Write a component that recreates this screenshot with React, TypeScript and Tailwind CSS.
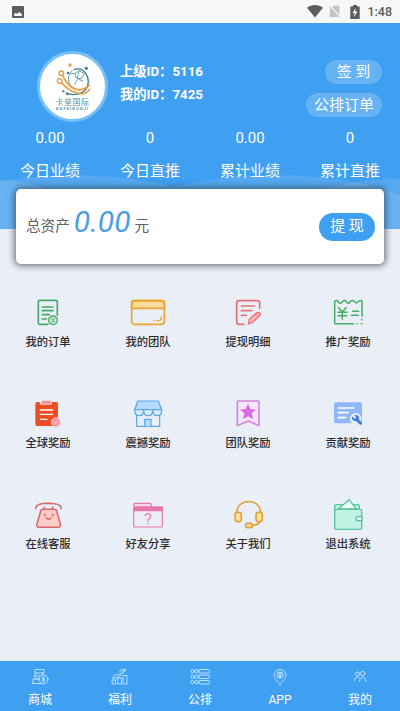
import React from "react";

const FONT = "font-[Roboto,'Noto_Sans_CJK_SC',sans-serif]";

function StatusBar() {
  return (
    <div className="flex h-[23px] items-center bg-[#f7f7f7] pl-3 pr-2 text-[#5c5c5c]">
      <svg width="12" height="12" viewBox="0 0 12 12">
        <rect width="12" height="12" rx="1" fill="#5e5e5e" />
        <path d="M2 10V8.500l1.800-1.700L5 8l2.500-2L10 8.500V10z" fill="#fff" />
      </svg>
      <svg className="ml-auto" width="16" height="13" viewBox="0 0 16 13">
        <path d="M0 2.7C4.5-.9 11.500-.9 16 2.700L8 12.600z" fill="#5c5c5c" />
      </svg>
      <svg className="ml-[6px]" width="12" height="13" viewBox="0 0 12 13">
        <path d="M4.500.8H10.500V12H.800V4.500z" fill="#c4c4c4" />
        <path d="M.4.800 11.500 12.500" stroke="#f7f7f7" strokeWidth="2" />
        <path d="M.2 1.300 10.800 12.600" stroke="#a9a9a9" strokeWidth=".8" />
      </svg>
      <svg className="ml-[9px]" width="10" height="14" viewBox="0 0 10 14">
        <path d="M.3 1.500H3V0h4v1.500h2.700V14H.300z" fill="#5c5c5c" />
        <path d="M5.600 3 2.500 8h2l-.5 4 3.500-5.500H5.300z" fill="#fff" />
      </svg>
      <span className="ml-[7px] pt-px text-[12.500px] font-medium leading-none">1:48</span>
    </div>
  );
}

function Logo() {
  return (
    <div className="flex size-[71px] flex-col items-center rounded-full border-[3px] border-[#78c1f7] bg-white pt-[8px]">
      <svg width="36" height="34" viewBox="158 184 108 102" fill="none">
        <path d="M215 207C243 196 265 227 255 258C245 279 216 289 190 276" stroke="#397e8b" strokeWidth="4" />
        <path d="M211 208C193 224 195 249 211 262M218 218l13-8 15 9-9 15-17-3zM231 210l-7 23 18 9M202 220l16-2M225 237l-8 15" stroke="#6da3aa" strokeWidth="3" />
        <path d="M180 223C201 269 232 281 263 252M177 246C205 277 247 293 263 264" stroke="#e1a24b" strokeWidth="5" />
        <path d="M185 231C208 267 231 270 247 263" stroke="#e1a24b" strokeWidth="3" />
        <circle cx="177" cy="218" r="7" fill="#fff" stroke="#df9b3f" strokeWidth="4" />
        <circle cx="172" cy="241" r="7" fill="#fff" stroke="#df9b3f" strokeWidth="4" />
        <circle cx="203" cy="193" r="5" fill="#dfa157" />
        <circle cx="252" cy="203" r="5" fill="#3e808b" />
        <circle cx="197" cy="217" r="4" fill="#3e808b" />
        <path d="M180 270l6 4m6 5 6 3" stroke="#3e808b" strokeWidth="5" />
      </svg>
      <div className="mt-[2px] whitespace-nowrap text-[8px] font-normal leading-[9px] tracking-[0.500px] text-[#4f8f98]">卡垒国际</div>
      <div className="whitespace-nowrap text-[4.300px] font-bold leading-[4px] tracking-[0.900px] text-[#5c969e]">KAFEIGUOJI</div>
    </div>
  );
}

const stats = [
  ["0.00", "今日业绩"],
  ["0", "今日直推"],
  ["0.00", "累计业绩"],
  ["0", "累计直推"],
];

function Header() {
  return (
    <div className="relative h-[206px] overflow-hidden bg-[#3f9ff1] text-white">
      <svg className="absolute left-0 top-[150px]" width="400" height="56" viewBox="0 173 400 56">
        <g fill="#fff" fillOpacity=".11">
          <path d="M-85 229A160 53 0 0 1 175 187A160 53 0 0 1 435 229z" />
          <ellipse cx="-14" cy="229" rx="102" ry="50" />
          <ellipse cx="395" cy="229" rx="115" ry="50" />
        </g>
      </svg>
      <div className="relative flex pl-[37px] pr-[18px] pt-7">
        <Logo />
        <div className="ml-3 pt-[9px] text-[13.300px] font-bold leading-[23px]">
          <div>上级ID：5116</div>
          <div>我的ID：7425</div>
        </div>
        <div className="ml-auto flex flex-col items-end gap-[9px] pt-[9px] text-[15px] leading-[25px]">
          <div className="h-6 w-[57px] rounded-full bg-[#65b2f5] text-center">签 到</div>
          <div className="h-6 w-[76px] rounded-full bg-[#65b2f5] text-center">公排订单</div>
        </div>
      </div>
      <div className="relative grid grid-cols-4 pt-[5px] text-center">
        {stats.map(([n, t]) => (
          <div key={t}>
            <div className="text-[15px] leading-[22px]">{n}</div>
            <div className="mt-[11px] text-[15px] leading-[22px]">{t}</div>
          </div>
        ))}
      </div>
    </div>
  );
}

/* Menu icons, each drawn on a 108-unit canvas */
const menu: { label: string; box: string; art: React.ReactNode }[] = [
  {
    label: "我的订单",
    box: "90 30 108 108",
    art: (
      <g stroke="#48ab6a" strokeWidth="5">
        <path d="M144 118H119Q115 118 115 114V50Q115 46 119 46H168Q172 46 172 50V91" />
        <path d="M127 66h32M127 77h32M127 89h21M127 102h12" />
        <circle cx="159" cy="106" r="13" fill="#c8e8d3" strokeWidth="4" />
        <path d="M153 99l6 6 6-6M159 105v3l-6 5m6-5 6 5" strokeWidth="2.500" />
      </g>
    ),
  },
  {
    label: "我的团队",
    box: "390 30 108 108",
    art: (
      <g stroke="#eaa52f" strokeWidth="5">
        <path d="M395 70V54Q395 47 402 47H486Q493 47 493 54V70z" fill="#ffdb9d" />
        <rect x="395" y="47" width="98" height="71" rx="9" />
        <path d="M461 107h1m8 0h6Q484 107 484 96" strokeWidth="4" />
      </g>
    ),
  },
  {
    label: "提现明细",
    box: "90 30 108 108",
    art: (
      <g stroke="#e5717a" strokeWidth="5">
        <path d="M179 70V54Q179 47 172 47H117Q110 47 110 54V111Q110 118 117 118H132" />
        <path d="M124 63h40M124 77h31M124 91h15" />
        <path d="M145 117l3-14 24-21q10-1 9 7l-23 23z" fill="#ffb8bc" strokeWidth="4" />
        <path d="M166 87l10 9" strokeWidth="2" />
      </g>
    ),
  },
  {
    label: "推广奖励",
    box: "390 30 108 108",
    art: (
      <g stroke="#48ad69" strokeWidth="4.500">
        <path d="M461 116H405Q404 116 404 113V49Q410 44 414 49Q421 60 428 49Q434 44 439 49Q445 60 452 49Q457 44 463 49Q469 58 476 49Q481 44 486 49V94" />
        <path d="M416 68l11 13 11-13M427 81v22M414 82h27M414 92h27M458 79h18M454 91h21" />
        <path d="M471 116h1m12 0h1m0-13v1" />
      </g>
    ),
  },
  {
    label: "全球奖励",
    box: "90 33 108 108",
    art: (
      <>
        <rect x="106" y="51" width="68" height="72" rx="6" fill="#ee4c25" />
        <path d="M119 51h37v4q0 4-4 4h-29q-4 0-4-4z" fill="#fbd9d5" />
        <rect x="125" y="47" width="28" height="9" rx="3" fill="#f3909b" />
        <path d="M121 75h37M121 88h37M121 103h20" stroke="#fff" strokeWidth="4" />
        <circle cx="168" cy="112" r="14" fill="#f39aaa" stroke="#fbdbe1" strokeWidth="2" />
        <path d="M162 112l4 4 8-7" stroke="#fbd5dc" strokeWidth="2.500" />
      </>
    ),
  },
  {
    label: "震撼奖励",
    box: "390 33 108 108",
    art: (
      <g stroke="#5ba6e4" strokeWidth="3.500">
        <path d="M410 91V124H479V91" />
        <path d="M413 48H475L485 75H404z" fill="#b6dafd" />
        <path d="M404 74H431Q431 92 418 92Q404 92 404 74z" fill="#d9ecfe" />
        <path d="M431 74H458Q458 92 445 92Q431 92 431 74z" fill="#d9ecfe" />
        <path d="M458 74H485Q485 92 472 92Q458 92 458 74z" fill="#d9ecfe" />
        <path d="M434 124V103H453V124" fill="#b6dafd" />
      </g>
    ),
  },
  {
    label: "团队奖励",
    box: "90 33 108 108",
    art: (
      <>
        <path d="M112 122V51Q112 48 115 48H174Q177 48 177 51V122L145 108z" fill="#f4e5fa" stroke="#d381dc" strokeWidth="4.500" />
        <path d="M144 56l7 16 17 2-13 11 4 18-15-9-15 9 4-18-13-11 17-2z" fill="#d96bdc" />
      </>
    ),
  },
  {
    label: "贡献奖励",
    box: "390 33 108 108",
    art: (
      <>
        <rect x="402" y="52" width="84" height="63" rx="5" fill="#91b7fb" />
        <path d="M415 69h46M415 83h29M415 98h22" stroke="#fff" strokeWidth="5" />
        <circle cx="467" cy="101" r="17" fill="#eaf0fb" />
        <path d="M462 91q11-3 16 6l-2 6 11 12q-2 6-7 4l-12-11q-8 2-13-7l2-7 6 7 6-4z" fill="#427bdd" />
      </>
    ),
  },
  {
    label: "在线客服",
    box: "90 36 108 108",
    art: (
      <g stroke="#d7686b" strokeWidth="4.500">
        <path d="M107 71Q106 55 146 55Q186 56 184 71" />
        <path d="M123 75Q125 73 131 73H160Q166 73 169 75L181 117Q184 127 174 127H118Q107 127 111 117z" fill="#ffcac8" />
        <path d="M132 66v6M158 66v6M134 88v4M158 88v4M139 99Q146 107 153 99" />
      </g>
    ),
  },
  {
    label: "好友分享",
    box: "390 36 108 108",
    art: (
      <g stroke="#e779b0" strokeWidth="3.500">
        <path d="M402 66V57Q402 55 405 55H451Q454 55 454 58V66" fill="#f6d6e9" />
        <rect x="401" y="66" width="86" height="60" rx="3" />
        <path d="M402 66H487V77H402z" fill="#e276ad" />
        <path d="M435 92Q437 86 444 86Q453 87 452 94Q451 99 444 104V109M444 116v1" strokeWidth="4" />
      </g>
    ),
  },
  {
    label: "关于我们",
    box: "90 36 108 108",
    art: (
      <g stroke="#df9f30" strokeWidth="4.500">
        <path d="M110 83C111 38 181 38 182 83M181 109Q174 121 156 121" />
        <rect x="105" y="82" width="19" height="28" rx="8" fill="#ffdd9e" />
        <rect x="168" y="82" width="19" height="28" rx="8" fill="#ffdd9e" />
        <rect x="137" y="115" width="20" height="13" rx="6" fill="#ffdd9e" />
      </g>
    ),
  },
  {
    label: "退出系统",
    box: "390 36 108 108",
    art: (
      <g stroke="#5bc2a0" strokeWidth="4">
        <path d="M404 73V64Q404 59 410 59H473Q478 59 478 64V73" fill="#baf4df" />
        <path d="M415 72L447 44L469 72z" fill="#f0faf8" />
        <rect x="404" y="73" width="81" height="60" rx="4" fill="#c1f2e3" />
        <path d="M486 95H474Q468 95 468 101Q468 107 474 107H486z" fill="#e8faf4" />
      </g>
    ),
  },
];

const tabs: { label: string; art: React.ReactNode }[] = [
  {
    label: "商城",
    art: (
      <>
        <rect x="4.500" y="1.500" width="10" height="3.500" rx="1.500" />
        <path d="M7 5 4.500 6.500V8H10M5 8v3h4M3 11h6M2.500 15.500h9M3 11.500v3.500M12.500 5v2" />
        <circle cx="13.500" cy="11.500" r="4.500" />
        <path d="M15 10q-3-1.500-3 .5 0 .7 1.500 1t1.500 1q0 2-3 .5M13.500 9v5" />
      </>
    ),
  },
  {
    label: "福利",
    art: <path d="M2.500 12h3v4h-3zM8 10h3.500V16H8zM13.500 7.500H17V16h-3.500zM2.500 9.500l3.500-3 3 .5 6.500-5.500M3 10.500l6-1.500 6.500-6.500V1.500h-4L9.500 4" />,
  },
  {
    label: "公排",
    art: (
      <>
        {[1.5, 7, 12.5].map((y) => (
          <g key={y}>
            <circle cx="2.500" cy={y + 1.7} r="1.700" />
            <circle cx="6.500" cy={y + 1.7} r="1.700" />
            <rect x="9" y={y} width="10.500" height="3.500" rx="1" />
          </g>
        ))}
      </>
    ),
  },
  {
    label: "APP",
    art: (
      <>
        <path d="M10 16.500C7.500 13 4 10.500 4 7A6 5.500 0 0 1 16 7C16 10.500 12.500 13 10 16.500z" />
        <circle cx="10" cy="7" r="3.200" />
        <path d="M11.500 5.500q-3-1-3 .5 0 .7 1.500 1t1.500 1q0 1.500-3 .5M10 4.500v5" />
      </>
    ),
  },
  {
    label: "我的",
    art: (
      <>
        <circle cx="7.500" cy="6" r="2" />
        <circle cx="12.700" cy="5.500" r="2.200" />
        <path d="M4.500 12.500q0-3.500 3-3.500 1.500 0 2 1M9.500 13.500q0-4 3.200-4t3.300 4" />
      </>
    ),
  },
];

export default function App() {
  return (
    <div className={`flex h-[711px] w-[400px] flex-col overflow-hidden bg-[#e9eef7] ${FONT}`}>
      <StatusBar />
      <Header />
      <div className="relative mx-4 -mt-10 flex h-[75px] shrink-0 items-center rounded-[5px] bg-white pl-[10px] pr-[9px] text-[#606060] shadow-[0_0_6px_2px_rgba(55,60,70,0.65)]">
        <span className="pt-px text-[14.600px]">总资产</span>
        <span className="ml-[4px] pb-[10px] text-[30px] italic leading-none text-[#4d9ee0]">0.00</span>
        <span className="ml-[4px] pt-px text-[14.600px]">元</span>
        <div className="ml-auto h-7 w-14 rounded-full bg-[#3f9ff1] text-center text-[15px] leading-[27px] text-white">提 现</div>
      </div>
      <div className="mt-[31px] grid w-[396px] grid-cols-[98px_100px_100px_98px]">
        {menu.map((m) => (
          <div key={m.label} className="flex h-[101px] flex-col items-center first:pl-0 [&:nth-child(4n)]:pl-[2px] [&:nth-child(4n+1)]:pr-[2px]">
            <svg width="36" height="36" viewBox={m.box} fill="none" strokeLinecap="round" strokeLinejoin="round">
              {m.art}
            </svg>
            <div className="mt-[3px] whitespace-nowrap text-[11.300px] font-medium leading-[17px] text-[#2c2c2e]">{m.label}</div>
          </div>
        ))}
      </div>
      <div className="mt-auto grid h-[50px] shrink-0 grid-cols-5 bg-[#3f9ff1] text-white">
        {tabs.map((t) => (
          <div key={t.label} className="flex flex-col items-center pt-[7px]">
            <svg width="20" height="18" viewBox="0 0 20 18" fill="none" stroke="#c9e8fd" strokeWidth=".9" strokeLinecap="round" strokeLinejoin="round">
              {t.art}
            </svg>
            <div className="mt-[5px] text-[12px] leading-[18px]">{t.label}</div>
          </div>
        ))}
      </div>
    </div>
  );
}
